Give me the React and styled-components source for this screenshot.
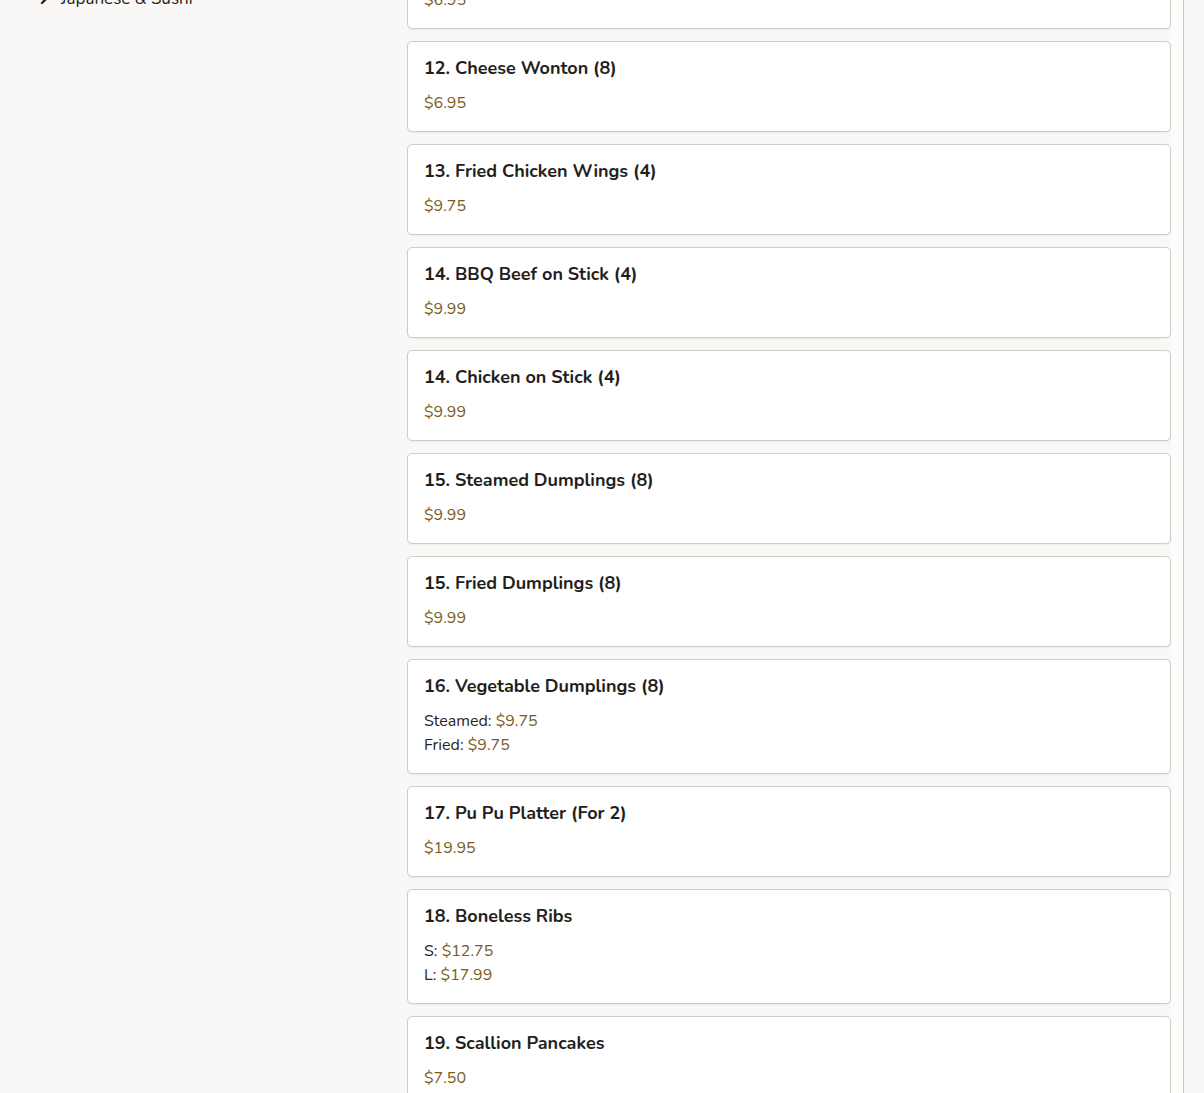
import React from 'react'
import styled, { createGlobalStyle } from 'styled-components'

const items = [
  { name: '11. Crab Rangoon (8)', prices: [{ price: '$6.95' }] },
  { name: '12. Cheese Wonton (8)', prices: [{ price: '$6.95' }] },
  { name: '13. Fried Chicken Wings (4)', prices: [{ price: '$9.75' }] },
  { name: '14. BBQ Beef on Stick (4)', prices: [{ price: '$9.99' }] },
  { name: '14. Chicken on Stick (4)', prices: [{ price: '$9.99' }] },
  { name: '15. Steamed Dumplings (8)', prices: [{ price: '$9.99' }] },
  { name: '15. Fried Dumplings (8)', prices: [{ price: '$9.99' }] },
  {
    name: '16. Vegetable Dumplings (8)',
    prices: [
      { label: 'Steamed:', price: '$9.75' },
      { label: 'Fried:', price: '$9.75' },
    ],
  },
  { name: '17. Pu Pu Platter (For 2)', prices: [{ price: '$19.95' }] },
  {
    name: '18. Boneless Ribs',
    prices: [
      { label: 'S:', price: '$12.75' },
      { label: 'L:', price: '$17.99' },
    ],
  },
  { name: '19. Scallion Pancakes', prices: [{ price: '$7.50' }] },
]

const App = () => {
  return (
    <>
      <GlobalStyle />
      <Page>
        <Sidebar>
          <CategoryLink>
            <svg width="12" height="14" viewBox="0 0 12 14">
              <path d="M4 11 L8.5 6.5 L5.5 3.5" fill="none" stroke="#2a2420" strokeWidth="2.4" strokeLinecap="round" strokeLinejoin="round" />
            </svg>
            Japanese &amp; Sushi
          </CategoryLink>
        </Sidebar>

        <MenuColumn>
          <CardList>
            {items.map((item, index) => (
              <ItemCard key={index}>
                <ItemName>{item.name}</ItemName>
                <PriceList>
                  {item.prices.map((p, i) => (
                    <PriceRow key={i}>
                      {p.label && <span>{p.label} </span>}
                      <Price>{p.price}</Price>
                    </PriceRow>
                  ))}
                </PriceList>
              </ItemCard>
            ))}
          </CardList>
        </MenuColumn>
      </Page>
    </>
  )
}

export default App

const GlobalStyle = createGlobalStyle`
  html, body {
    margin: 0;
    padding: 0;
    background: #faf8f6;
    overflow: hidden;
  }
  body {
    font-family: "Nunito", "Lato", "Open Sans", sans-serif;
    color: #2a2420;
  }
`

const Page = styled.div`
  display: flex;
  margin-top: -62px;
  height: 1155px;
  overflow: hidden;
`

const Sidebar = styled.div`
  width: 407px;
  flex-shrink: 0;
  padding-left: 38px;
  padding-top: 49px;
  box-sizing: border-box;
`

const CategoryLink = styled.div`
  display: flex;
  align-items: center;
  gap: 11px;
  font-size: 17px;
  line-height: 24px;
  color: #2a2420;
`

const MenuColumn = styled.div`
  width: 777px;
  padding-right: 12px;
  box-sizing: border-box;
  border-right: 1px solid #c9c6c3;
  background: linear-gradient(to right, transparent 764px, #fdfcfb 764px);
`

const CardList = styled.div`
  display: flex;
  flex-direction: column;
  gap: 12px;
`

const ItemCard = styled.div`
  background: #ffffff;
  border: 1px solid #cfcbc7;
  border-radius: 5px;
  padding: 14px 16px 16px;
  box-shadow: 0 1px 2px rgba(0, 0, 0, 0.06);
`

const ItemName = styled.div`
  font-size: 18px;
  font-weight: 700;
  line-height: 24px;
  color: #231e1b;
`

const PriceList = styled.div`
  margin-top: 11px;
`

const PriceRow = styled.div`
  font-size: 16px;
  line-height: 24px;
  color: #2a2420;
`

const Price = styled.span`
  color: #7a5a1c;
`
